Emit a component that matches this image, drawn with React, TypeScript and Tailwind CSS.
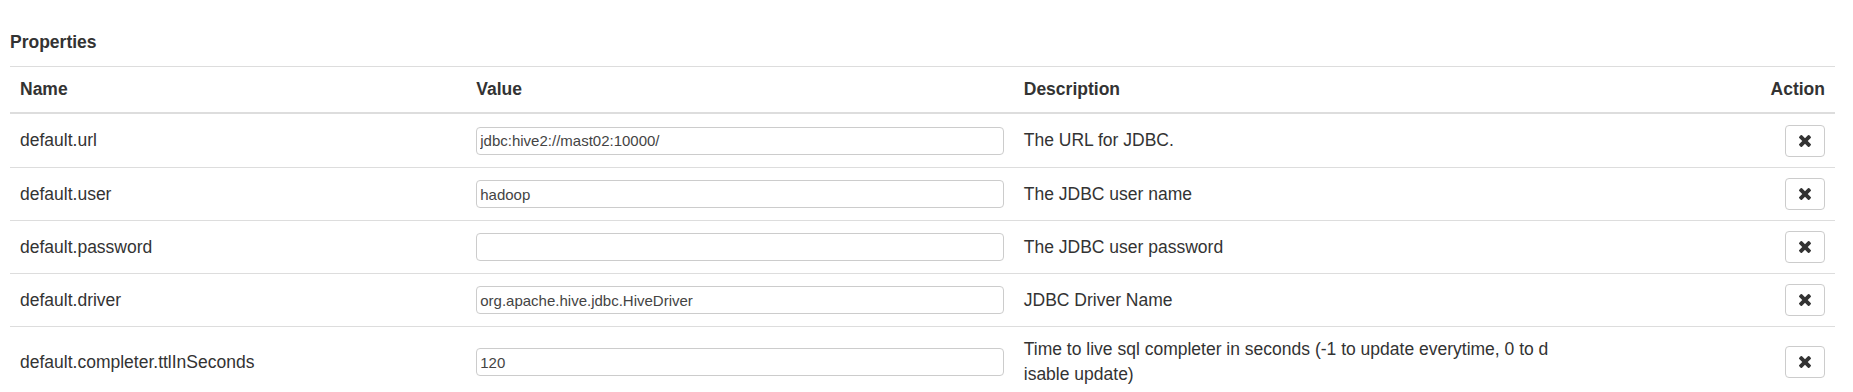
type Property = {
  name: string;
  value: string;
  description: string;
};

const properties: Property[] = [
  { name: "default.url", value: "jdbc:hive2://mast02:10000/", description: "The URL for JDBC." },
  { name: "default.user", value: "hadoop", description: "The JDBC user name" },
  { name: "default.password", value: "", description: "The JDBC user password" },
  { name: "default.driver", value: "org.apache.hive.jdbc.HiveDriver", description: "JDBC Driver Name" },
  {
    name: "default.completer.ttlInSeconds",
    value: "120",
    description: "Time to live sql completer in seconds (-1 to update everytime, 0 to disable update)",
  },
];

const cols = "grid grid-cols-[25%_30%_30%_15%]";

// font-awesome 4 style "times" glyph
const TimesIcon = () => (
  <svg viewBox="110 366 1188 1188" className="w-[12px] h-[12px]" fill="currentColor">
    <path d="M1298 1322q0 40-28 68l-136 136q-28 28-68 28t-68-28l-294-294-294 294q-28 28-68 28t-68-28l-136-136q-28-28-28-68t28-68l294-294-294-294q-28-28-28-68t28-68l136-136q28-28 68-28t68 28l294 294 294-294q28-28 68-28t68 28l136 136q28 28 28 68t-28 68l-294 294 294 294q28 28 28 68z" />
  </svg>
);

export default function App() {
  return (
    <div className="min-h-screen bg-white pl-[10px] pr-[18px] pt-[30px] text-[17.5px] leading-[25px] text-[#333] font-['Liberation_Sans',Arial,sans-serif]">
      {/* Section title */}
      <div className="h-[25px] font-bold mb-[11px]">Properties</div>

      {/* Properties table */}
      <div className="w-full">
        <div className={`${cols} h-[48px] border-t border-b-2 border-[#ddd] font-bold`}>
          <div className="px-[10px] flex items-center">Name</div>
          <div className="px-[10px] flex items-center">Value</div>
          <div className="px-[10px] flex items-center">Description</div>
          <div className="px-[10px] flex items-center justify-end">Action</div>
        </div>

        {properties.map((p, i) => (
          <div
            key={p.name}
            className={`${cols} min-h-[53px] ${i > 0 ? "border-t border-[#ddd]" : ""}`}
          >
            <div className="px-[10px] py-[10px] flex items-center">{p.name}</div>
            <div className="px-[10px] flex items-center">
              <input
                type="text"
                defaultValue={p.value}
                className="w-full h-[28px] border border-[#ccc] rounded-[4px] px-[3px] text-[15px] text-[#444] bg-white outline-none font-['Liberation_Sans',Arial,sans-serif]"
              />
            </div>
            <div className="px-[10px] py-[10px] flex items-center break-all">{p.description}</div>
            <div className="px-[10px] flex items-center justify-end">
              <button className="w-[40px] h-[32px] border border-[#ccc] rounded-[4px] bg-white flex items-center justify-center text-[#333]">
                <TimesIcon />
              </button>
            </div>
          </div>
        ))}
      </div>
    </div>
  );
}
